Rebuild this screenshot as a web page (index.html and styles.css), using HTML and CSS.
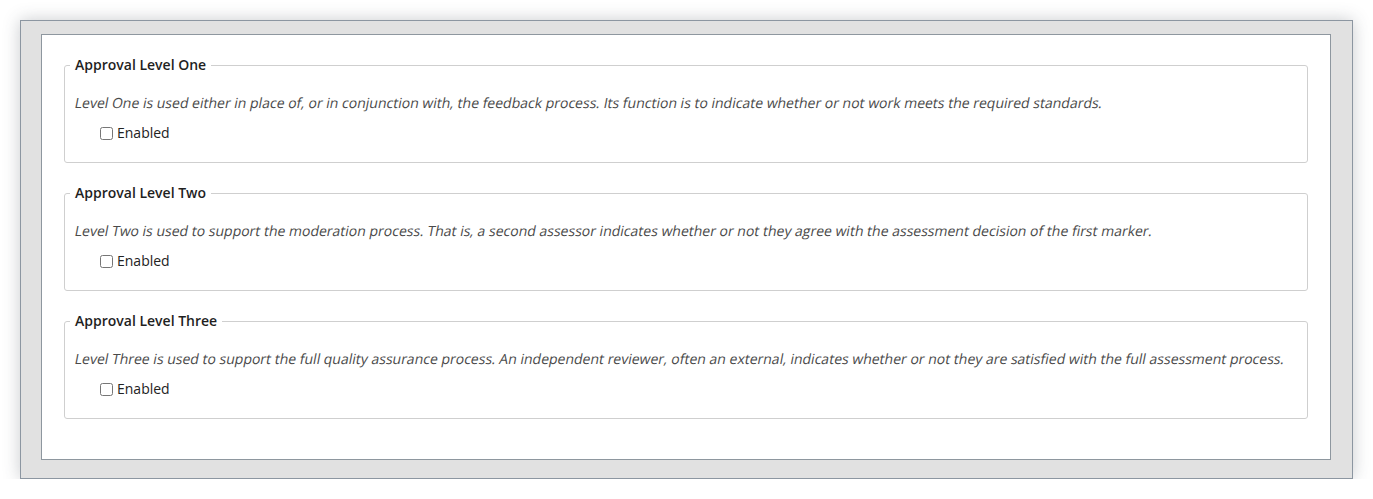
FILE: index.html
```html
<!DOCTYPE html>
<html lang="en">
<head>
<meta charset="utf-8">
<title>Approval Levels</title>
<link rel="stylesheet" href="styles.css">
</head>
<body>
<div class="frame">
  <div class="panel">
    <fieldset class="level">
      <legend>Approval Level One</legend>
      <p class="desc">Level One is used either in place of, or in conjunction with, the feedback process. Its function is to indicate whether or not work meets the required standards.</p>
      <label class="check"><input type="checkbox"> Enabled</label>
    </fieldset>
    <fieldset class="level">
      <legend>Approval Level Two</legend>
      <p class="desc">Level Two is used to support the moderation process. That is, a second assessor indicates whether or not they agree with the assessment decision of the first marker.</p>
      <label class="check"><input type="checkbox"> Enabled</label>
    </fieldset>
    <fieldset class="level">
      <legend>Approval Level Three</legend>
      <p class="desc">Level Three is used to support the full quality assurance process. An independent reviewer, often an external, indicates whether or not they are satisfied with the full assessment process.</p>
      <label class="check"><input type="checkbox"> Enabled</label>
    </fieldset>
  </div>
</div>
</body>
</html>
```
FILE: styles.css
```css
html, body {
  margin: 0;
  padding: 0;
  background: #ffffff;
}
body {
  font-family: "Open Sans", "Liberation Sans", sans-serif;
  font-size: 14px;
  line-height: 20px;
  color: #333;
}
.frame {
  margin: 20px 20px 0 20px;
  border: 1px solid #8c96a1;
  background: #e1e1e1;
  padding: 13px 21px 18px 20px;
  box-shadow: 0 0 16px rgba(60, 70, 80, 0.28);
}
.panel {
  background: #ffffff;
  border: 1px solid #8e979f;
  padding: 20px 22px 40px 22px;
}
.level {
  margin: 20px 0 0 0;
  padding: 0 10px 19px 10px;
  border: 1px solid #cfcfcf;
  border-radius: 3px;
  min-width: 0;
}
.level:first-child {
  margin-top: 0;
}
.level legend {
  padding: 0 5px;
  margin-left: -5px;
  font-weight: 600;
  color: #1f1f1f;
}
.desc {
  margin: 18px 0 10px 0;
  color: #4a4a4a;
  transform: skewX(-11deg);
  transform-origin: 0 50%;
}
.check {
  display: flex;
  align-items: center;
  padding-left: 21px;
  color: #222;
}
.check input {
  margin: 0 4px 0 4px;
  width: 13px;
  height: 13px;
}
```
